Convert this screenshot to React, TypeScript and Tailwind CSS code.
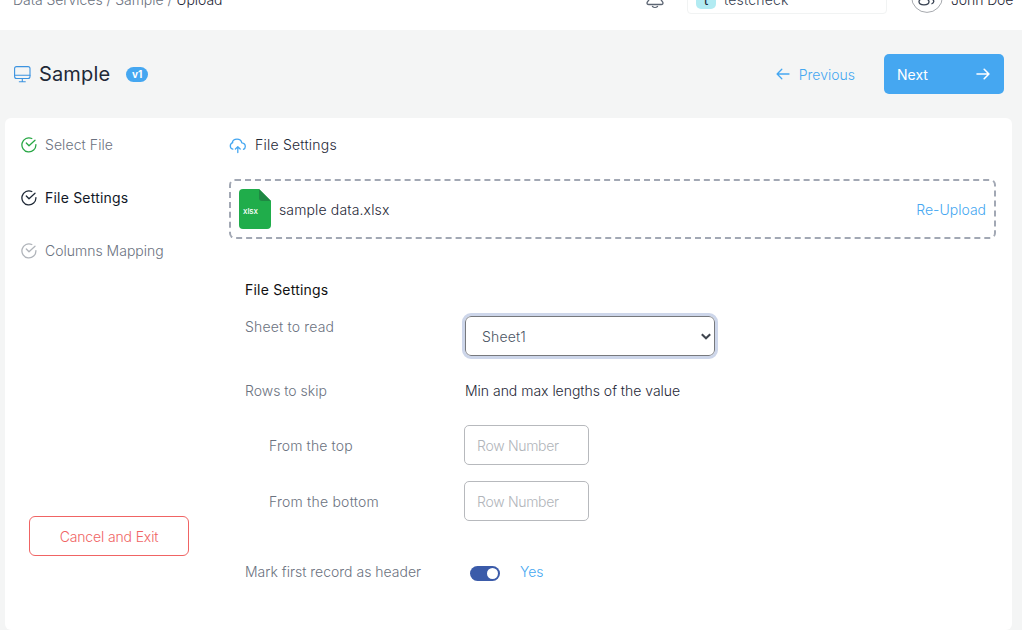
import React from "react";

function CheckIcon({ className }: { className: string }) {
  return (
    <svg className={`h-4 w-4 shrink-0 ${className}`} viewBox="0 0 16 16" fill="none" stroke="currentColor" strokeWidth="1.3" strokeLinecap="round" strokeLinejoin="round">
      <path d="M14.9 7.6A7 7 0 1 1 10.800 1.500" />
      <path d="M5.300 6 8 8.700 14 3.300" />
    </svg>
  );
}

function Arrow({ left, className }: { left?: boolean; className: string }) {
  return (
    <svg className={`shrink-0 ${className}`} width="14" height="12" viewBox="0 0 14 12" fill="none" stroke="currentColor" strokeLinecap="round" strokeLinejoin="round">
      <path d={left ? "M13 6H1.2M5.8 1.3 1.1 6l4.7 4.7" : "M1 6h11.8M8.2 1.3 12.9 6l-4.7 4.7"} />
    </svg>
  );
}

function TopBar() {
  return (
    <header className="h-[30px] overflow-hidden bg-white">
      <div className="-mt-8 flex h-[62px] items-center pl-[13px] pr-[10px]">
        <div className="whitespace-pre text-[14px] font-light tracking-[-0.04px] text-[#6b7280]">
          Data Services / Sample / <span className="font-[350] text-[#1f2937]">Upload</span>
        </div>
        <svg className="ml-auto mr-[22px]" width="20" height="20" viewBox="0 0 20 20" fill="none" stroke="#5b6472" strokeWidth="1.3" strokeLinecap="round">
          <path d="M10 1.500a5.500 5.500 0 0 0-5.500 5.500v3L2.300 13.200c-.7 1.200 0 2.300 1.500 2.300h12.400c1.500 0 2.200-1.100 1.500-2.300L15.500 10V7A5.500 5.500 0 0 0 10 1.500ZM7.500 17.500c1.300 1.100 3.700 1.100 5 0" />
        </svg>
        <div className="mr-6 flex h-[30px] w-[200px] items-center rounded-[4px] border border-[#f1f3f3] pl-2">
          <span className="flex h-5 w-5 items-center justify-center rounded-[5px] bg-[#b2ebf2] text-[14px] text-[#1f2937]">t</span>
          <span className="ml-2 text-[14px] font-[350] tracking-[0.2px] text-[#374151]">testcheck</span>
        </div>
        <svg className="mr-2 -mt-1" width="32" height="32" viewBox="0 0 32 32" fill="none" stroke="#374151" strokeWidth="1.3">
          <circle cx="16" cy="16" r="15.400" stroke="#a6a9ae" strokeWidth="1" />
          <circle cx="14" cy="12" r="3.400" />
          <path d="M12.500 17.300c-3 .6-4.500 1.800-4.500 3.500 0 2 2 3 5 3s5-1 5-3c0-1.700-2.500-3.100-5.500-3.500ZM20 10.500c2.500 1.500 2.500 5 0 6.500M20.500 22.800c3-.7 3-3.700.3-4.800" />
        </svg>
        <span className="w-[61px] whitespace-nowrap text-[14px] font-[350] tracking-[-0.1px] text-[#1f2937]">John Doe</span>
      </div>
    </header>
  );
}

function TitleBar() {
  return (
    <div className="flex h-[88px] items-center pl-[14px] pr-[18px]">
      <svg className="mr-2 shrink-0" width="17" height="17" viewBox="0 0 17 17" fill="none" stroke="#3b93e0" strokeWidth="1.1" strokeLinecap="round">
        <rect x=".6" y=".6" width="15.400" height="11.900" rx="2" />
        <path d="M.6 9.300H16M8.300 12.500v3M5.300 15.700h6" />
      </svg>
      <h1 className="text-[20px] font-[370] leading-6 tracking-[0.15px] text-[#1f2937]">Sample</h1>
      <span className="ml-4 flex h-[15px] w-[22px] items-center justify-center rounded-full bg-[#45a7f1] text-[10px] font-bold text-white">v1</span>
      <button className="ml-auto flex items-center text-[14px] font-light text-[#45a7f1]">
        <Arrow left className="mr-[9px] stroke-[1.3]" />
        <span>Previous</span>
      </button>
      <button className="ml-[29px] flex h-10 w-[120px] items-center justify-between rounded-[5px] bg-[#45a7f1] pl-[13px] pr-[14px] text-[14px] font-[370] text-white">
        <span>Next</span>
        <Arrow className="stroke-[1.6]" />
      </button>
    </div>
  );
}

function Sidebar() {
  return (
    <aside className="flex w-[224px] shrink-0 flex-col pl-4 pt-[17px] text-[14px] leading-5">
      <div className="flex flex-col gap-[33px]">
        <div className="flex items-center gap-2 font-light tracking-[0.08px] text-[#6b7280]">
          <CheckIcon className="text-[#28a745]" />Select File
        </div>
        <div className="flex items-center gap-2 font-[370] tracking-[0.2px] text-[#111827]">
          <CheckIcon className="text-[#1f2937]" />File Settings
        </div>
        <div className="flex items-center gap-2 font-light text-[#6b7280]">
          <CheckIcon className="text-[#b0b4ba]" />Columns Mapping
        </div>
      </div>
      <button className="ml-2 mt-[255px] h-10 w-40 rounded-[6px] border border-[#f06464] pt-[2px] font-light tracking-[-0.14px] text-[#f06464]">Cancel and Exit</button>
    </aside>
  );
}

function FileRow() {
  return (
    <div className="mt-6 flex h-[60px] items-center rounded-[6px] border-2 border-dashed border-[#a2a8b4] px-2">
      <svg className="shrink-0" width="32" height="40" viewBox="0 0 32 40">
        <path d="M4 0h16l12 12v24a4 4 0 0 1-4 4H4a4 4 0 0 1-4-4V4a4 4 0 0 1 4-4Z" fill="#20ad4b" />
        <path d="M20 0l12 12h-9a3 3 0 0 1-3-3Z" fill="#1f8843" />
        <text x="4" y="25" fill="#fff" fontSize="8" fontWeight="500" textLength="15">xlsx</text>
      </svg>
      <span className="ml-2 text-[14px] font-[350] tracking-[0.14px] text-[#1f2937]">sample data.xlsx</span>
      <a className="ml-auto text-[14px] font-light text-[#45a7f1]">Re-Upload</a>
    </div>
  );
}

function SettingsForm() {
  return (
    <div className="pl-4 pt-[41px] text-[14px] leading-5 text-[#6b7280]">
      <h2 className="font-[400] tracking-[0.2px] text-[#111]">File Settings</h2>
      <div className="mt-4 flex h-10 items-start">
        <label className="w-[220px] pt-px font-light tracking-[0.17px]">Sheet to read</label>
        <div className="flex h-10 w-[250px] items-center justify-between rounded-[6px] border border-[#77797d] pl-4 pr-[3px] font-light text-[#4b5563] outline-3 outline-[#cdd6ea]">
          <span className="pt-px tracking-[0.15px]">Sheet1</span>
          <svg width="10" height="7" viewBox="0 0 10 7" fill="none" stroke="#40464f" strokeWidth="2">
            <path d="M.8 1.200 5 5.300l4.200-4.100" />
          </svg>
        </div>
      </div>
      <div className="mt-[25px] flex">
        <span className="w-[220px] font-light">Rows to skip</span>
        <span className="font-[350] tracking-[-0.02px] text-[#1f2937]">Min and max lengths of the value</span>
      </div>
      <div className="mt-6 flex items-center">
        <label className="w-[219px] pl-6 pt-[2px] font-light tracking-[0.12px]">From the top</label>
        <input className="h-10 w-[125px] rounded-[5px] border border-[#b7b9bd] px-3 font-light tracking-[-0.3px] placeholder:text-[#b1b5ba]" placeholder="Row Number" />
      </div>
      <div className="mt-4 flex items-center">
        <label className="w-[219px] pl-6 pt-[2px] font-light tracking-[0.22px]">From the bottom</label>
        <input className="h-10 w-[125px] rounded-[5px] border border-[#b7b9bd] px-3 font-light tracking-[-0.3px] placeholder:text-[#b1b5ba]" placeholder="Row Number" />
      </div>
      <div className="mt-[41px] flex">
        <span className="w-[225px] font-light">Mark first record as header</span>
        <span className="mt-1 flex h-[15px] w-[30px] items-center justify-end rounded-full bg-[#3b5ba9] pr-[2px]">
          <span className="h-[11px] w-[11px] rounded-full bg-white" />
        </span>
        <span className="ml-5 font-light text-[#45a7f1]">Yes</span>
      </div>
    </div>
  );
}

export default function App() {
  return (
    <div className="h-[630px] w-[1022px] overflow-hidden bg-[#f4f5f5] font-['Inter','Liberation_Sans',sans-serif]">
      <TopBar />
      <TitleBar />
      <div className="ml-[5px] flex h-[512px] w-[1007px] rounded-[6px] bg-white">
        <Sidebar />
        <main className="flex-1 pr-4 pt-[17px]">
          <div className="flex items-center text-[14px] font-[350] leading-5 tracking-[0.22px] text-[#1f2937]">
            <svg className="mr-[9px] mt-px" width="17" height="16" viewBox="0 0 17 16" fill="none" stroke="#45a7f1" strokeWidth="1.3" strokeLinecap="round" strokeLinejoin="round">
              <path d="M3.800 11.200C2.200 10.700 1.300 9.400 1.300 7.900c0-1.700 1.100-2.900 2.500-3.300M3.200 4.800C3.700 2.500 5.600 1.200 8 1.200c2.400 0 4.300 1.400 4.800 3.700 1.900.2 3.500 1.600 3.500 3.600 0 1.400-.7 2.300-1.800 2.800M8.800 14.600V9M6.400 11l2.400-2.300 2.400 2.300" />
            </svg>
            File Settings
          </div>
          <FileRow />
          <SettingsForm />
        </main>
      </div>
    </div>
  );
}
